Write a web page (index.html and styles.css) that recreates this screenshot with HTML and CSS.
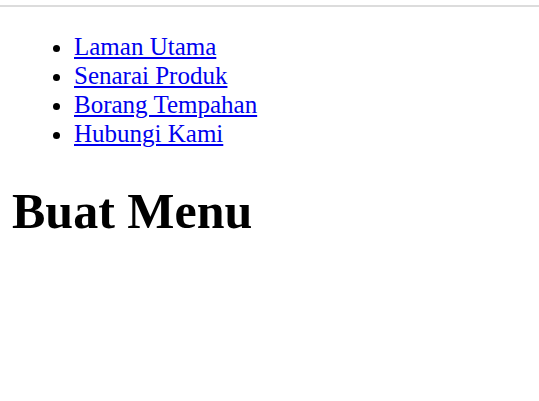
FILE: index.html
```html
<!DOCTYPE html>
<html>
<head>
<meta charset="utf-8">
<link rel="stylesheet" href="styles.css">
</head>
<body>
<div class="topline"></div>
<div class="page">
  <ul class="nav">
    <li><a href="#">Laman Utama</a></li>
    <li><a href="#">Senarai Produk</a></li>
    <li><a href="#">Borang Tempahan</a></li>
    <li><a href="#">Hubungi Kami</a></li>
  </ul>
  <h1 class="title">Buat Menu</h1>
</div>
</body>
</html>
```
FILE: styles.css
```css
html, body {
  margin: 0;
  padding: 0;
  background: #fff;
}
body {
  font-family: "Liberation Serif", "Times New Roman", serif;
  color: #000;
}
.topline {
  margin-top: 5px;
  height: 2px;
  background: #dcdcdc;
}
.page {
  padding: 0 12px;
}
.nav {
  margin: 25px 0 35px;
  padding-left: 62px;
  font-size: 25px;
  line-height: 29px;
  list-style: disc;
}
.nav a {
  color: #0000ee;
  text-decoration: underline;
}
.title {
  margin: 0;
  font-size: 50px;
  line-height: 57px;
  font-weight: bold;
}
```
